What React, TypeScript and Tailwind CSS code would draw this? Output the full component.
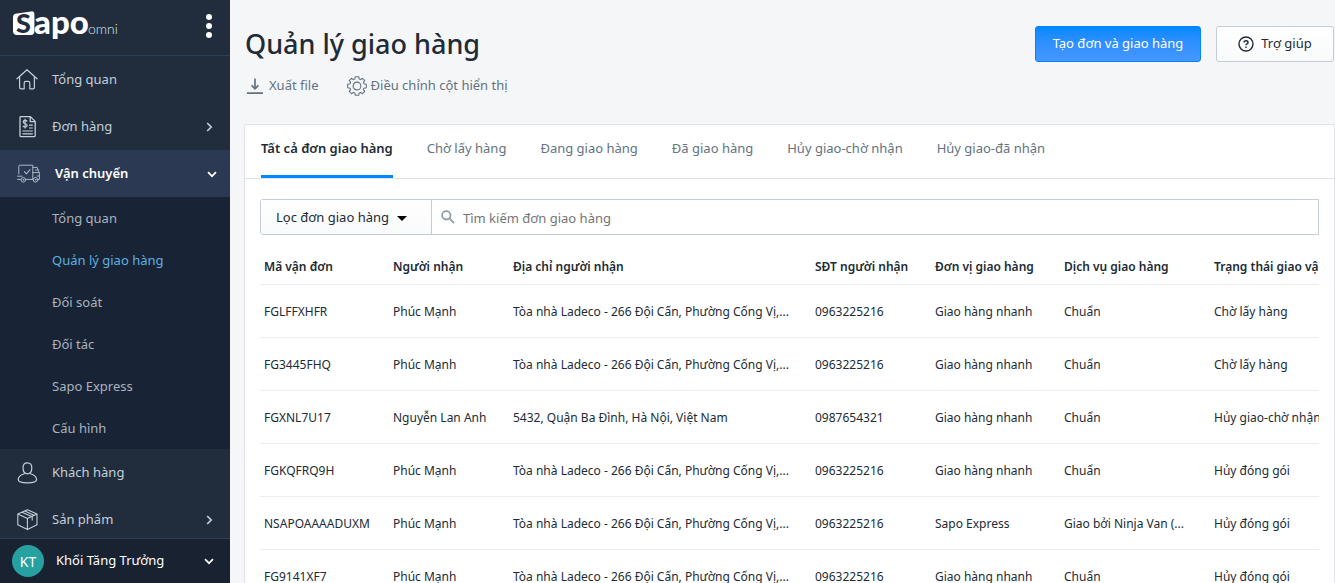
import React, { useState } from 'react';

type MenuItem = { label: string; icon: React.ReactNode; chevron?: boolean };

type Shipment = {
  code: string;
  receiver: string;
  address: string;
  phone: string;
  carrier: string;
  service: string;
  status: string;
};

const HomeIcon = () => (
  <svg width="22" height="22" viewBox="0 0 22 22" fill="none" stroke="currentColor" strokeLinejoin="round" strokeLinecap="round">
    <path d="M1 9.8 11 .8 21 9.8M3.6 8V18.2Q3.6 19.8 5 19.8H8.2V14Q8.2 12.4 9.8 12.4H12.2Q13.8 12.4 13.8 14V19.8H17Q18.4 19.8 18.4 18.2V8" strokeWidth="1.2" />
  </svg>
);

const OrderIcon = () => (
  <svg width="22" height="22" viewBox="0 0 22 22" fill="none" stroke="currentColor" strokeLinejoin="round">
    <path d="M5 .6H14.4L19.2 5.4V19.4Q19.2 20.6 18 20.6H5.2Q4 20.6 4 19.4V1.6Q4 .6 5 .6ZM14.2.8V5.6H19" strokeWidth="1.3" />
    <path d="M6.4 15H16.8M6.4 17.8H16.8M13 9.2H16.8M13 12H16.8" strokeWidth="1.2" />
    <path d="M11.2 5.4Q10.4 4.2 9 4.3 7.2 4.4 7.2 5.8 7.2 7.2 9 7.5 11.2 7.9 11.2 9.6 11.2 11 9.2 11.1 7.5 11.1 6.8 9.8M9.1 2.8V12.6" strokeWidth="1.2" />
  </svg>
);

const TruckIcon = () => (
  <svg width="24" height="20" viewBox="0 0 24 20" fill="none" stroke="currentColor" strokeLinejoin="round" strokeLinecap="round">
    <path d="M1.8 10V2.2Q1.8 1.2 2.8 1.2H15.8V15.4H9M16 3.4H20.2L22.4 9.2V15.4H21.4M16 8.6H22M18.6 6H21M.6 12.2H5M.6 15.4H3.6M16 15.4H15.6M22 12H20" strokeWidth="1" />
    <path d="M7.4 7.6 9.4 9.8 13 5.6" strokeWidth="1.1" />
    <circle cx="6.3" cy="15.8" r="2.3" />
    <circle cx="18.5" cy="15.8" r="2.3" />
    <circle cx="6.3" cy="15.8" r=".4" />
    <circle cx="18.5" cy="15.8" r=".4" />
  </svg>
);

const CustomerIcon = () => (
  <svg width="22" height="22" viewBox="0 0 22 22" fill="none" stroke="currentColor" strokeLinejoin="round">
    <path d="M11.4.8C8.4.8 7 2.8 7 5.8 7 9.2 8.6 11.8 11.4 11.8 14.2 11.8 15.8 9.2 15.8 5.8 15.8 2.8 14.4.8 11.4.8Z" strokeWidth="1.2" />
    <path d="M8.6 11.6C6 12.6 2.2 13.8 2.2 17.6 2.2 20 6.4 20.9 11.4 20.9 16.4 20.9 20.6 20 20.6 17.6 20.6 13.8 16.8 12.6 14.2 11.6" strokeWidth="1.2" />
  </svg>
);

const ProductIcon = () => (
  <svg width="22" height="22" viewBox="0 0 22 22" fill="none" stroke="currentColor" strokeLinejoin="round">
    <path d="M11.4.8 21 5V15.8L11.4 20.6 1.8 15.8V5ZM1.8 5 11.4 9.6 21 5M11.4 9.6V20.6M6 3.2 16.2 7.8V11.4M8.8 2 18.4 6.4" strokeWidth="1.1" />
  </svg>
);

const Chevron = ({ down = false }: { down?: boolean }) => (
  <svg width="12" height="12" viewBox="0 0 12 12" fill="none" stroke="currentColor" strokeWidth="1.7">
    {down ? <path d="M2 4.2 6 8.2 10 4.2" /> : <path d="M4.2 2 8.2 6 4.2 10" />}
  </svg>
);

const DownloadIcon = () => (
  <svg width="16" height="17" viewBox="0 0 16 17" fill="none" stroke="currentColor" strokeWidth="1.7">
    <path d="M8 .5V11M4.6 7.4 8 10.8 11.4 7.4M0 15.2H16" />
  </svg>
);

const GearIcon = () => (
  <svg width="20" height="20" viewBox="0 0 20 20" fill="none" stroke="currentColor" strokeWidth="1.1" strokeLinejoin="round">
    <path d="M8.3.7H11.7L12.2 3 13.6 3.6 15.4 2.3 17.7 4.6 16.4 6.4 17 7.8 19.3 8.3V11.7L17 12.2 16.4 13.6 17.7 15.4 15.4 17.7 13.6 16.4 12.2 17 11.7 19.3H8.3L7.8 17 6.4 16.4 4.6 17.7 2.3 15.4 3.6 13.6 3 12.2.7 11.7V8.3L3 7.8 3.6 6.4 2.3 4.6 4.6 2.3 6.4 3.6 7.8 3Z" />
    <circle cx="10" cy="10" r="3.9" />
  </svg>
);

const HelpIcon = () => (
  <svg width="16" height="16" viewBox="0 0 16 16" fill="none" stroke="currentColor" strokeWidth="1.4">
    <circle cx="8" cy="8" r="7" />
    <path d="M6 6.6Q6 4.7 8 4.7 10 4.7 10 6.4 10 7.3 9 7.9 8 8.4 8 9.3M8 10.4V12" />
  </svg>
);

const SearchIcon = () => (
  <svg width="14" height="14" viewBox="0 0 14 14" fill="none" stroke="currentColor" strokeWidth="1.8">
    <circle cx="5.3" cy="5.3" r="4.2" />
    <path d="M8.4 8.4 13 13" />
  </svg>
);

const Logo = () => (
  <svg width="108" height="50" viewBox="0 0 108 50" fontFamily="Lato, sans-serif">
    <path d="M3.4 12.8 19 10.4Q22.4 10 22.4 13.4V30Q22.4 34 18.8 34H5Q1 34 1 30V16Q1 13.2 3.4 12.8Z" fill="#fff" />
    <text x="4" y="32" fontSize="27" fontWeight="900" fill="#212d3d">S</text>
    <text x="22" y="33" fontSize="33" fontWeight="900" fill="#fff">apo</text>
    <text x="76" y="33" fontSize="14" fontWeight="300" fill="#dfe5ea">omni</text>
  </svg>
);

const topItems: MenuItem[] = [
  { label: 'Tổng quan', icon: <HomeIcon /> },
  { label: 'Đơn hàng', icon: <OrderIcon />, chevron: true },
];

const bottomItems: MenuItem[] = [
  { label: 'Khách hàng', icon: <CustomerIcon /> },
  { label: 'Sản phẩm', icon: <ProductIcon />, chevron: true },
];

const subItems = ['Tổng quan', 'Quản lý giao hàng', 'Đối soát', 'Đối tác', 'Sapo Express', 'Cấu hình'];

const tabs = ['Tất cả đơn giao hàng', 'Chờ lấy hàng', 'Đang giao hàng', 'Đã giao hàng', 'Hủy giao-chờ nhận', 'Hủy giao-đã nhận'];

const columns = [
  { title: 'Mã vận đơn', width: 'w-[129px]' },
  { title: 'Người nhận', width: 'w-[120px]' },
  { title: 'Địa chỉ người nhận', width: 'w-[302px]' },
  { title: 'SĐT người nhận', width: 'w-[120px]' },
  { title: 'Đơn vị giao hàng', width: 'w-[129px]' },
  { title: 'Dịch vụ giao hàng', width: 'w-[150px]' },
  { title: 'Trạng thái giao vận', width: 'w-[150px]' },
];

const ladeco = 'Tòa nhà Ladeco - 266 Đội Cấn, Phường Cống Vị,...';

const shipments: Shipment[] = [
  { code: 'FGLFFXHFR', receiver: 'Phúc Mạnh', address: ladeco, phone: '0963225216', carrier: 'Giao hàng nhanh', service: 'Chuẩn', status: 'Chờ lấy hàng' },
  { code: 'FG3445FHQ', receiver: 'Phúc Mạnh', address: ladeco, phone: '0963225216', carrier: 'Giao hàng nhanh', service: 'Chuẩn', status: 'Chờ lấy hàng' },
  { code: 'FGXNL7U17', receiver: 'Nguyễn Lan Anh', address: '5432, Quận Ba Đình, Hà Nội, Việt Nam', phone: '0987654321', carrier: 'Giao hàng nhanh', service: 'Chuẩn', status: 'Hủy giao-chờ nhận' },
  { code: 'FGKQFRQ9H', receiver: 'Phúc Mạnh', address: ladeco, phone: '0963225216', carrier: 'Giao hàng nhanh', service: 'Chuẩn', status: 'Hủy đóng gói' },
  { code: 'NSAPOAAAADUXM', receiver: 'Phúc Mạnh', address: ladeco, phone: '0963225216', carrier: 'Sapo Express', service: 'Giao bởi Ninja Van (...', status: 'Hủy đóng gói' },
  { code: 'FG9141XF7', receiver: 'Phúc Mạnh', address: ladeco, phone: '0963225216', carrier: 'Giao hàng nhanh', service: 'Chuẩn', status: 'Hủy đóng gói' },
];

const SidebarLink = ({ item }: { item: MenuItem }) => (
  <a href="#" className="flex h-[47px] shrink-0 items-center pr-[15px] pl-4 text-[#c3cfd9]">
    <span className="flex w-9 shrink-0">{item.icon}</span>
    <span className="flex-1">{item.label}</span>
    {item.chevron && <Chevron />}
  </a>
);

const Sidebar = () => (
  <aside className="flex w-[230px] shrink-0 flex-col bg-[#212d3d] text-[13px]">
    <div className="flex h-[56px] shrink-0 items-center justify-between border-b border-[#2a4055] pr-4 pb-1 pl-3">
      <a href="#" aria-label="Sapo omni">
        <Logo />
      </a>
      <button type="button" aria-label="Menu" className="flex w-[10px] flex-col items-center gap-[3px]">
        <span className="size-[6px] rounded-full bg-white" />
        <span className="size-[6px] rounded-full bg-white" />
        <span className="size-[6px] rounded-full bg-white" />
      </button>
    </div>

    <nav className="flex min-h-0 flex-1 flex-col overflow-hidden">
      {topItems.map((item) => (
        <SidebarLink key={item.label} item={item} />
      ))}
      <a href="#" className="flex h-[47px] shrink-0 items-center bg-[#2b3a52] pr-3 pl-[17px] font-semibold text-white">
        <span className="flex w-[38px] shrink-0 text-[#a9b8c6]"><TruckIcon /></span>
        <span className="flex-1">Vận chuyển</span>
        <Chevron down />
      </a>
      <div className="shrink-0 bg-[#182435]">
        {subItems.map((label) => (
          <a
            key={label}
            href="#"
            className={`flex h-[42px] items-center pt-0.5 pl-[52px] ${label === 'Quản lý giao hàng' ? 'text-[#5cb1e0]' : 'text-[#aab2bf]'}`}
          >
            {label}
          </a>
        ))}
      </div>
      {bottomItems.map((item) => (
        <SidebarLink key={item.label} item={item} />
      ))}
    </nav>

    <button type="button" className="flex h-[45px] shrink-0 items-center gap-3 border-t border-[#2a4055] bg-[#182231] pr-[15px] pl-3 text-left text-white">
      <span className="flex size-8 items-center justify-center rounded-full bg-[#26a19f] text-[14px]">KT</span>
      <span className="flex-1">Khối Tăng Trưởng</span>
      <Chevron down />
    </button>
  </aside>
);

const ShipmentTable = () => (
  <div className="overflow-hidden">
    <table className="w-full min-w-[1100px] table-fixed text-left text-[12px] text-[#212b35]">
      <thead>
        <tr className="h-[37px] border-b border-[#ebeef0]">
          {columns.map((col) => (
            <th key={col.title} className={`px-1 pt-1 font-semibold whitespace-nowrap ${col.width}`}>
              {col.title}
            </th>
          ))}
        </tr>
      </thead>
      <tbody>
        {shipments.map((row) => (
          <tr key={row.code} className="h-[53px] border-b border-[#ebeef0] whitespace-nowrap">
            <td className="px-1 pt-0.5">{row.code}</td>
            <td className="px-1 pt-0.5">{row.receiver}</td>
            <td className="px-1 pt-0.5">{row.address}</td>
            <td className="px-1 pt-0.5">{row.phone}</td>
            <td className="px-1 pt-0.5">{row.carrier}</td>
            <td className="px-1 pt-0.5">{row.service}</td>
            <td className="px-1 pt-0.5">{row.status}</td>
          </tr>
        ))}
      </tbody>
    </table>
  </div>
);

export default function App() {
  const [activeTab, setActiveTab] = useState(tabs[0]);
  const [query, setQuery] = useState('');

  return (
    <div className="flex h-screen overflow-hidden bg-[#f4f6f8] font-['Noto_Sans',sans-serif] text-[13px] text-[#212b35]">
      <Sidebar />
      <main className="min-w-0 flex-1 overflow-hidden pl-[14px]">
        <header className="flex items-start justify-between pt-[26px] pl-px">
          <div>
            <h1 className="text-[27px] leading-9 font-medium">Quản lý giao hàng</h1>
            <div className="mt-[14px] flex items-center gap-7 text-[#637381]">
              <button type="button" className="flex items-center gap-1.5 pl-0.5">
                <DownloadIcon />
                Xuất file
              </button>
              <button type="button" className="flex items-center gap-1">
                <GearIcon />
                Điều chỉnh cột hiển thị
              </button>
            </div>
          </div>
          <div className="flex gap-[15px] pr-px">
            <button type="button" className="h-9 w-[166px] rounded-[3px] border border-[#0084ff] bg-linear-to-b from-[#0088ff] to-[#4797ff] text-white">
              Tạo đơn và giao hàng
            </button>
            <button type="button" className="flex h-9 w-[118px] items-center justify-center gap-[7px] rounded-[3px] border border-[#c4cdd5] bg-linear-to-b from-white to-[#f9fafb]">
              <HelpIcon />
              Trợ giúp
            </button>
          </div>
        </header>

        <section className="mt-7 rounded-[3px] border border-[#dfe3e8] bg-white">
          <div className="flex gap-[34px] border-b border-[#dfe3e8] px-4">
            {tabs.map((tab) => (
              <button
                key={tab}
                type="button"
                onClick={() => setActiveTab(tab)}
                className={`h-[53px] border-b-3 pb-0.5 ${
                  tab === activeTab ? 'border-[#0088ff] font-semibold' : 'border-transparent text-[#637381]'
                }`}
              >
                {tab}
              </button>
            ))}
          </div>
          <div className="px-[15px] pt-5">
            <div className="mb-3 flex h-9 rounded-l-[3px] border border-[#c4cdd5]">
              <button type="button" className="flex w-[171px] shrink-0 items-center gap-2 border-r border-[#c4cdd5] bg-linear-to-b from-white to-[#f9fafb] pt-0.5 pl-[15px]">
                Lọc đơn giao hàng
                <span className="border-x-5 border-t-5 border-x-transparent border-t-black" />
              </button>
              <label className="flex flex-1 items-center gap-2 pl-[9px] text-[#919eab]">
                <SearchIcon />
                <input
                  type="text"
                  aria-label="Tìm kiếm đơn giao hàng"
                  placeholder="Tìm kiếm đơn giao hàng"
                  value={query}
                  onChange={(e) => setQuery(e.target.value)}
                  className="flex-1 pt-1 text-[#212b35] outline-none placeholder:text-[#757575]"
                />
              </label>
            </div>
            <ShipmentTable />
          </div>
        </section>
      </main>
    </div>
  );
}
